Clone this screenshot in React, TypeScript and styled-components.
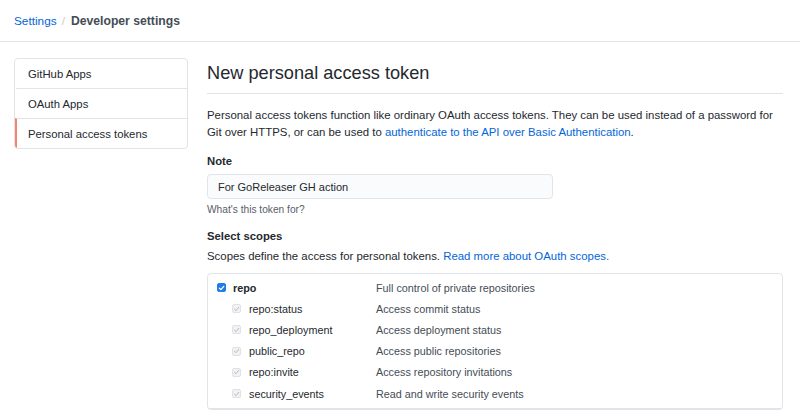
import React from 'react'
import styled, { createGlobalStyle } from 'styled-components'

const GlobalStyle = createGlobalStyle`
  html, body {
    margin: 0;
    padding: 0;
    background: #fff;
    font-family: "Liberation Sans", Arial, sans-serif;
    color: #24292e;
    overflow: hidden;
  }
`

const scopes = [
  { name: 'repo:status', desc: 'Access commit status' },
  { name: 'repo_deployment', desc: 'Access deployment status' },
  { name: 'public_repo', desc: 'Access public repositories' },
  { name: 'repo:invite', desc: 'Access repository invitations' },
  { name: 'security_events', desc: 'Read and write security events' },
]

const CheckIcon = ({ muted }: { muted?: boolean }) => (
  <svg width="8" height="8" viewBox="0 0 10 10">
    <path d="M2 5.2 L4.2 7.4 L8.2 2.6" fill="none" stroke={muted ? '#a9adb2' : '#fff'} strokeWidth={muted ? 1.2 : 1.8} strokeLinecap="round" strokeLinejoin="round" />
  </svg>
)

const App = () => {
  return (
    <>
      <GlobalStyle />
      <Page>
        <Header>
          <Crumb href="#">Settings</Crumb>
          <Slash>/</Slash>
          <CrumbCurrent>Developer settings</CrumbCurrent>
        </Header>
        <Layout>
          <SideNav>
            <NavItem>GitHub Apps</NavItem>
            <NavItem>OAuth Apps</NavItem>
            <NavItem active>Personal access tokens</NavItem>
          </SideNav>
          <Main>
            <Title>New personal access token</Title>
            <Intro>
              Personal access tokens function like ordinary OAuth access tokens. They can be used instead of a password for
              <br />
              Git over HTTPS, or can be used to <Link href="#">authenticate to the API over Basic Authentication</Link>.
            </Intro>
            <Label>Note</Label>
            <Input defaultValue="For GoReleaser GH action" />
            <Hint>What's this token for?</Hint>
            <Label>Select scopes</Label>
            <Intro tight>
              Scopes define the access for personal tokens. <Link href="#">Read more about OAuth scopes.</Link>
            </Intro>
            <ScopeBox>
              <ScopeGroup>
                <ScopeRow>
                  <ScopeName>
                    <Box checked><CheckIcon /></Box>
                    <strong>repo</strong>
                  </ScopeName>
                  <ScopeDesc>Full control of private repositories</ScopeDesc>
                </ScopeRow>
                {scopes.map(s => (
                  <ScopeRow key={s.name}>
                    <ScopeName child>
                      <Box><CheckIcon muted /></Box>
                      {s.name}
                    </ScopeName>
                    <ScopeDesc>{s.desc}</ScopeDesc>
                  </ScopeRow>
                ))}
              </ScopeGroup>
            </ScopeBox>
          </Main>
        </Layout>
      </Page>
    </>
  )
}

const Page = styled.div`
  width: 800px;
  height: 416px;
  overflow: hidden;
`

const Header = styled.div`
  height: 41px;
  display: flex;
  align-items: center;
  padding: 0 14px;
  border-bottom: 1px solid #e1e4e8;
  font-size: 11.8px;
`

const Crumb = styled.a`
  color: #0366d6;
  text-decoration: none;
`

const Slash = styled.span`
  color: #c6cbd1;
  margin: 0 6px 0 5px;
`

const CrumbCurrent = styled.span`
  color: #444d56;
  font-weight: 700;
  font-size: 12.2px;
`

const Layout = styled.div`
  display: flex;
  padding: 16px 16px 0 14px;
  gap: 19px;
`

const SideNav = styled.nav`
  width: 172px;
  flex-shrink: 0;
  align-self: flex-start;
  border: 1px solid #e1e4e8;
  border-radius: 4px;
  overflow: hidden;
`

const NavItem = styled.div<{ active?: boolean }>`
  height: 29px;
  display: flex;
  align-items: center;
  padding-left: 11px;
  font-size: 11.3px;
  color: #24292e;
  border-left: 2px solid ${p => (p.active ? '#f9826c' : 'transparent')};
  & + & {
    border-top: 1px solid #e1e4e8;
  }
`

const Main = styled.div`
  flex: 1;
  padding-right: 1px;
`

const Title = styled.h2`
  margin: 5px 0 0;
  font-size: 18.2px;
  font-weight: 400;
  padding-bottom: 9px;
  border-bottom: 1px solid #e1e4e8;
`

const Intro = styled.p<{ tight?: boolean }>`
  margin: ${p => (p.tight ? '5px' : '13px')} 0 0;
  font-size: 11.4px;
  line-height: 17px;
  color: #24292e;
  white-space: nowrap;
`

const Link = styled.a`
  color: #0366d6;
  text-decoration: none;
`

const Label = styled.div`
  margin-top: 13px;
  font-size: 11.3px;
  line-height: 14px;
  font-weight: 700;
`

const Input = styled.input`
  display: block;
  box-sizing: border-box;
  margin-top: 6px;
  width: 346px;
  height: 25px;
  padding: 0 10px;
  font-family: inherit;
  font-size: 11px;
  color: #24292e;
  background: #fafbfc;
  border: 1px solid #e1e4e8;
  border-radius: 4px;
  outline: none;
`

const Hint = styled.div`
  margin-top: 5px;
  font-size: 10.2px;
  line-height: 12px;
  color: #586069;
`

const ScopeBox = styled.div`
  margin-top: 8px;
  border: 1px solid #e1e4e8;
  border-radius: 4px;
`

const ScopeGroup = styled.div`
  padding: 3px 9px 4px;
  border-bottom: 1px solid #e1e4e8;
`

const ScopeRow = styled.div`
  display: flex;
  align-items: center;
  height: 21.2px;
  font-size: 10.8px;
`

const ScopeName = styled.label<{ child?: boolean }>`
  display: flex;
  align-items: center;
  gap: ${p => (p.child ? '8px' : '7px')};
  box-sizing: border-box;
  width: 159px;
  padding-left: ${p => (p.child ? '15px' : '0')};
  color: #24292e;
`

const ScopeDesc = styled.span`
  color: #444d56;
`

const Box = styled.span<{ checked?: boolean }>`
  display: inline-flex;
  align-items: center;
  justify-content: center;
  box-sizing: border-box;
  width: 9px;
  height: 9px;
  border-radius: 2px;
  background: ${p => (p.checked ? '#1f7ce9' : '#f1f2f4')};
  border: 1px solid ${p => (p.checked ? '#1f7ce9' : '#dfe2e5')};
`

export default App
